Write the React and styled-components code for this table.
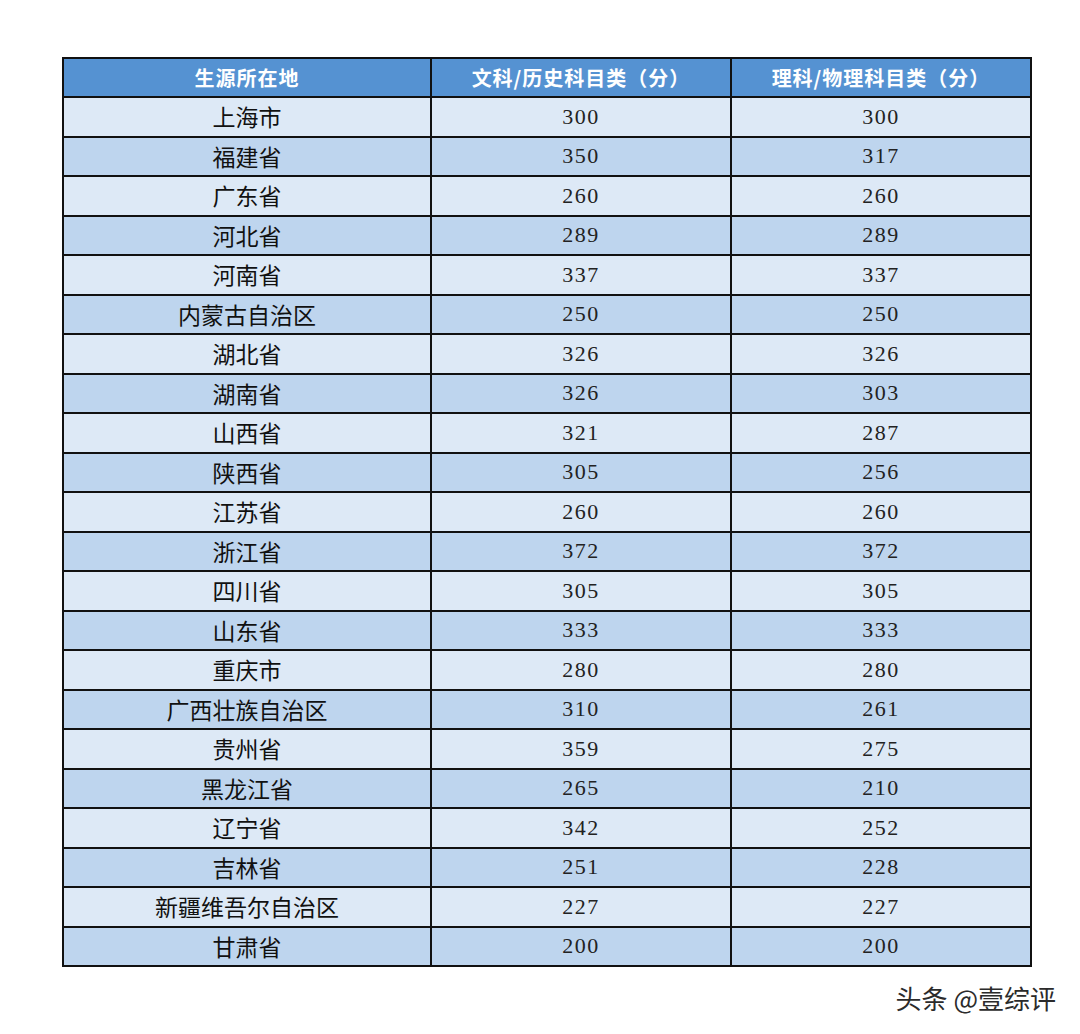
import React from "react";
import styled, { createGlobalStyle } from "styled-components";

const GlobalStyle = createGlobalStyle`
    html, body {
        margin: 0;
        padding: 0;
        background: #ffffff;
    }
`

const Page = styled.div`
    width: 1080px;
    height: 1034px;
    padding: 57px 0 0 62px;
    box-sizing: border-box;
    background: #ffffff;
`

const Table = styled.table`
    width: 968px;
    border-collapse: collapse;
    border: 2px solid #111;
    table-layout: fixed;
`

const HeadCell = styled.th`
    height: 37px;
    padding: 0;
    background: #5592d2;
    color: #ffffff;
    border: 2px solid #111;
    font-family: "Noto Sans CJK SC", sans-serif;
    font-weight: 700;
    font-size: 20px;
    letter-spacing: 1px;
    text-align: center;
`

const Row = styled.tr`
    background: ${props => props.$dark ? "#bed5ee" : "#dde9f6"};
`

const PlaceCell = styled.td`
    height: 37.5px;
    padding: 0;
    border: 2px solid #111;
    text-align: center;
    font-family: "Noto Sans CJK SC", sans-serif;
    font-size: 23px;
    color: #111;
    line-height: 1;
`

const ScoreCell = styled(PlaceCell)`
    font-family: "Liberation Serif", "Noto Sans CJK SC", serif;
    font-size: 22px;
    color: #222;
    letter-spacing: 1.5px;
`

const Footer = styled.div`
    width: 994px;
    margin-top: 12px;
    text-align: right;
    font-family: "Noto Sans CJK SC", sans-serif;
    font-size: 26px;
    color: #2b2b2b;
`

const rows = [
    ["上海市", 300, 300],
    ["福建省", 350, 317],
    ["广东省", 260, 260],
    ["河北省", 289, 289],
    ["河南省", 337, 337],
    ["内蒙古自治区", 250, 250],
    ["湖北省", 326, 326],
    ["湖南省", 326, 303],
    ["山西省", 321, 287],
    ["陕西省", 305, 256],
    ["江苏省", 260, 260],
    ["浙江省", 372, 372],
    ["四川省", 305, 305],
    ["山东省", 333, 333],
    ["重庆市", 280, 280],
    ["广西壮族自治区", 310, 261],
    ["贵州省", 359, 275],
    ["黑龙江省", 265, 210],
    ["辽宁省", 342, 252],
    ["吉林省", 251, 228],
    ["新疆维吾尔自治区", 227, 227],
    ["甘肃省", 200, 200],
];

const App = () => {
    return (
        <>
            <GlobalStyle />
            <Page>
                <Table>
                    <colgroup>
                        <col style={{ width: "368px" }} />
                        <col style={{ width: "300px" }} />
                        <col style={{ width: "300px" }} />
                    </colgroup>
                    <thead>
                        <tr>
                            <HeadCell>生源所在地</HeadCell>
                            <HeadCell>文科/历史科目类（分）</HeadCell>
                            <HeadCell>理科/物理科目类（分）</HeadCell>
                        </tr>
                    </thead>
                    <tbody>
                        {rows.map((r, i) => (
                            <Row key={r[0]} $dark={i % 2 === 1}>
                                <PlaceCell>{r[0]}</PlaceCell>
                                <ScoreCell>{r[1]}</ScoreCell>
                                <ScoreCell>{r[2]}</ScoreCell>
                            </Row>
                        ))}
                    </tbody>
                </Table>
                <Footer>头条 @壹综评</Footer>
            </Page>
        </>
    )
}

export default App;
